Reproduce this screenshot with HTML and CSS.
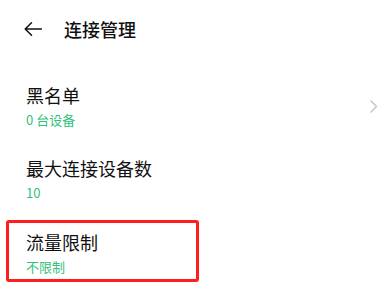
FILE: index.html
```html
<!DOCTYPE html>
<html lang="zh-CN">
<head>
<meta charset="utf-8">
<title>连接管理</title>
<link rel="stylesheet" href="styles.css">
</head>
<body>
<div class="page">
  <header class="topbar">
    <svg class="back" width="18" height="14" viewBox="0 0 18 14" aria-hidden="true">
      <path d="M17.5 7H1.2M7.5 0.8L1.2 7l6.3 6.2" fill="none" stroke="#111" stroke-width="1.5" stroke-linecap="round" stroke-linejoin="round"/>
    </svg>
    <h1 class="title">连接管理</h1>
  </header>
  <ul class="list">
    <li class="row">
      <div class="row-text">
        <div class="row-title">黑名单</div>
        <div class="row-sub">0 台设备</div>
      </div>
      <svg class="chev" width="8" height="13" viewBox="0 0 8 13" aria-hidden="true">
        <path d="M1 1l5.5 5.5L1 12" fill="none" stroke="#c6c6c6" stroke-width="1.5" stroke-linecap="round" stroke-linejoin="round"/>
      </svg>
    </li>
    <li class="row">
      <div class="row-text">
        <div class="row-title">最大连接设备数</div>
        <div class="row-sub">10</div>
      </div>
    </li>
    <li class="row row-marked">
      <div class="row-text">
        <div class="row-title">流量限制</div>
        <div class="row-sub">不限制</div>
      </div>
    </li>
  </ul>
</div>
</body>
</html>
```

FILE: styles.css
```css
html, body {
  margin: 0;
  padding: 0;
  background: #ffffff;
}

body {
  font-family: "Noto Sans CJK SC", "Noto Sans", Roboto, sans-serif;
  color: #111111;
}

.page {
  width: 392px;
  height: 291px;
  overflow: hidden;
}

.topbar {
  height: 58px;
  display: flex;
  align-items: center;
  padding-left: 24px;
  gap: 22px;
}

.back {
  display: block;
  flex: none;
}

.title {
  margin: 0;
  font-size: 18px;
  line-height: 24px;
  font-weight: 500;
  color: #111111;
}

.list {
  list-style: none;
  margin: 0;
  padding: 11px 0 0 0;
}

.row {
  display: flex;
  align-items: center;
  justify-content: space-between;
  padding: 14px 14px 13px 26px;
}

.row-text {
  display: flex;
  flex-direction: column;
  gap: 4px;
}

.row-title {
  font-size: 18px;
  line-height: 24px;
  color: #111111;
}

.row-sub {
  font-size: 13px;
  line-height: 18px;
  color: #33bf7c;
}

.chev {
  display: block;
  flex: none;
}

.row-marked {
  width: 193px;
  box-sizing: border-box;
  margin: 5px 0 0 6px;
  padding: 7px 0 3px 17px;
  border: 3px solid #ff1d1d;
  border-radius: 3px;
}
```
